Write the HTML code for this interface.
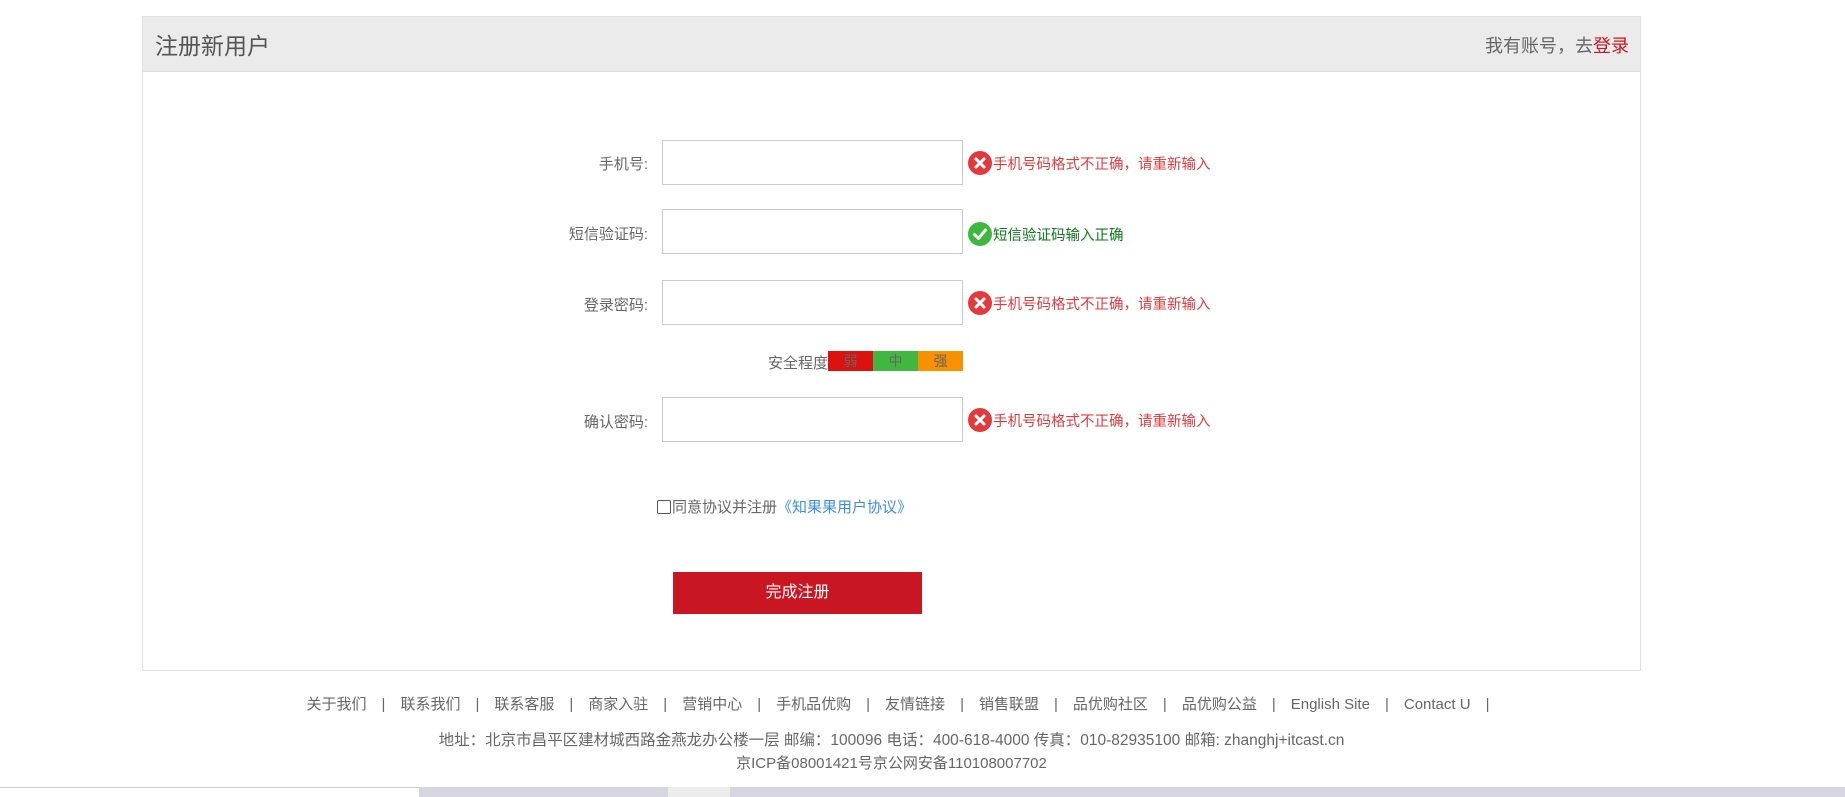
<!DOCTYPE html>
<html><head><meta charset="utf-8">
<style>
*{margin:0;padding:0;box-sizing:border-box}
body{width:1845px;height:797px;background:#fff;font-family:"Liberation Sans","Noto Sans CJK SC",sans-serif;color:#666;position:relative;overflow:hidden}
.panel{position:absolute;left:142px;top:16px;width:1499px;height:655px;border:1px solid #e0e0e0}
.hd{height:55px;background:#ebebeb;border-bottom:1px solid #ddd;position:relative}
.hd .t{position:absolute;left:12px;top:10px;font-size:23px;color:#555}
.hd .r{position:absolute;right:11px;top:15px;font-size:18px;color:#666}
.hd .r span{color:#c81623}
.abs{position:absolute}
.lbl{position:absolute;right:1197px;font-size:15px;color:#666;text-align:right;white-space:nowrap}
.inp{position:absolute;left:662px;width:301px;height:45px;border:1px solid #ccc;background:#fff}
.msg{position:absolute;left:968px;font-size:14.5px;display:flex;align-items:center;white-space:nowrap}
.ic{width:24px;height:24px;border-radius:50%;display:inline-block;margin-right:1px;position:relative}
.err{color:#e4393c}.err .ic{background:#e4393c}
.ok{color:#0a7a1a}.ok .ic{background:#3db83d}
.bar{position:absolute;top:351px;height:20px;width:45px;font-size:14px;text-align:center;line-height:20px;color:#666}
.btn{position:absolute;left:673px;top:572px;width:249px;height:42px;background:#c81623;color:#fff;font-size:16px;text-align:center;line-height:42px}
.foot{position:absolute;left:0;width:1845px;text-align:center;font-size:15px;color:#666;white-space:nowrap}
.foot i{font-style:normal;margin:0 15px;color:#666}
</style></head><body>
<div class="panel"><div class="hd"><div class="t">注册新用户</div><div class="r">我有账号，去<span>登录</span></div></div></div>

<div class="lbl" style="top:153px">手机号:</div>
<div class="inp" style="top:140px"></div>
<div class="msg err" style="top:151px"><span class="ic"><svg width="24" height="24"><path d="M8 8L16 16M16 8L8 16" stroke="#fff" stroke-width="3" stroke-linecap="round"/></svg></span>手机号码格式不正确，请重新输入</div>

<div class="lbl" style="top:223px">短信验证码:</div>
<div class="inp" style="top:209px"></div>
<div class="msg ok" style="top:222px"><span class="ic"><svg width="24" height="24"><path d="M6.5 12.5L10.5 16.5L17.5 8" stroke="#fff" stroke-width="3" fill="none" stroke-linecap="round" stroke-linejoin="round"/></svg></span>短信验证码输入正确</div>

<div class="lbl" style="top:294px">登录密码:</div>
<div class="inp" style="top:280px"></div>
<div class="msg err" style="top:291px"><span class="ic"><svg width="24" height="24"><path d="M8 8L16 16M16 8L8 16" stroke="#fff" stroke-width="3" stroke-linecap="round"/></svg></span>手机号码格式不正确，请重新输入</div>

<div class="abs" style="left:768px;top:352px;font-size:15px;color:#666">安全程度</div>
<div class="bar" style="left:828px;background:#de1111">弱</div>
<div class="bar" style="left:873px;background:#40b83f">中</div>
<div class="bar" style="left:918px;width:45px;background:#f79100">强</div>

<div class="lbl" style="top:411px">确认密码:</div>
<div class="inp" style="top:397px"></div>
<div class="msg err" style="top:408px"><span class="ic"><svg width="24" height="24"><path d="M8 8L16 16M16 8L8 16" stroke="#fff" stroke-width="3" stroke-linecap="round"/></svg></span>手机号码格式不正确，请重新输入</div>

<div class="abs" style="left:657px;top:496px;font-size:15px;color:#666;display:flex;align-items:center;white-space:nowrap"><span style="display:inline-block;width:14px;height:14px;border:1px solid #555;border-radius:2px;margin-right:1px"></span>同意协议并注册<span style="color:#3c8ee0">《知果果用户协议》</span></div>

<div class="btn">完成注册</div>

<div class="foot" style="top:693px;left:-17px">关于我们<i>|</i>联系我们<i>|</i>联系客服<i>|</i>商家入驻<i>|</i>营销中心<i>|</i>手机品优购<i>|</i>友情链接<i>|</i>销售联盟<i>|</i>品优购社区<i>|</i>品优购公益<i>|</i>English Site<i>|</i>Contact U<i>|</i></div>
<div class="foot" style="top:728px;left:-31px;font-size:15.5px">地址：北京市昌平区建材城西路金燕龙办公楼一层 邮编：100096 电话：400-618-4000 传真：010-82935100 邮箱: zhanghj+itcast.cn</div>
<div class="foot" style="top:752px;left:-31px">京ICP备08001421号京公网安备110108007702</div>

<div class="abs" style="left:0;top:787px;width:419px;height:10px;background:#fff;border-top:1px solid #ccc"></div>
<div class="abs" style="left:419px;top:787px;width:249px;height:10px;background:#d5d6df"></div>
<div class="abs" style="left:668px;top:787px;width:62px;height:10px;background:#ececec"></div>
<div class="abs" style="left:730px;top:787px;width:1115px;height:10px;background:#d5d6df"></div>
</body></html>
